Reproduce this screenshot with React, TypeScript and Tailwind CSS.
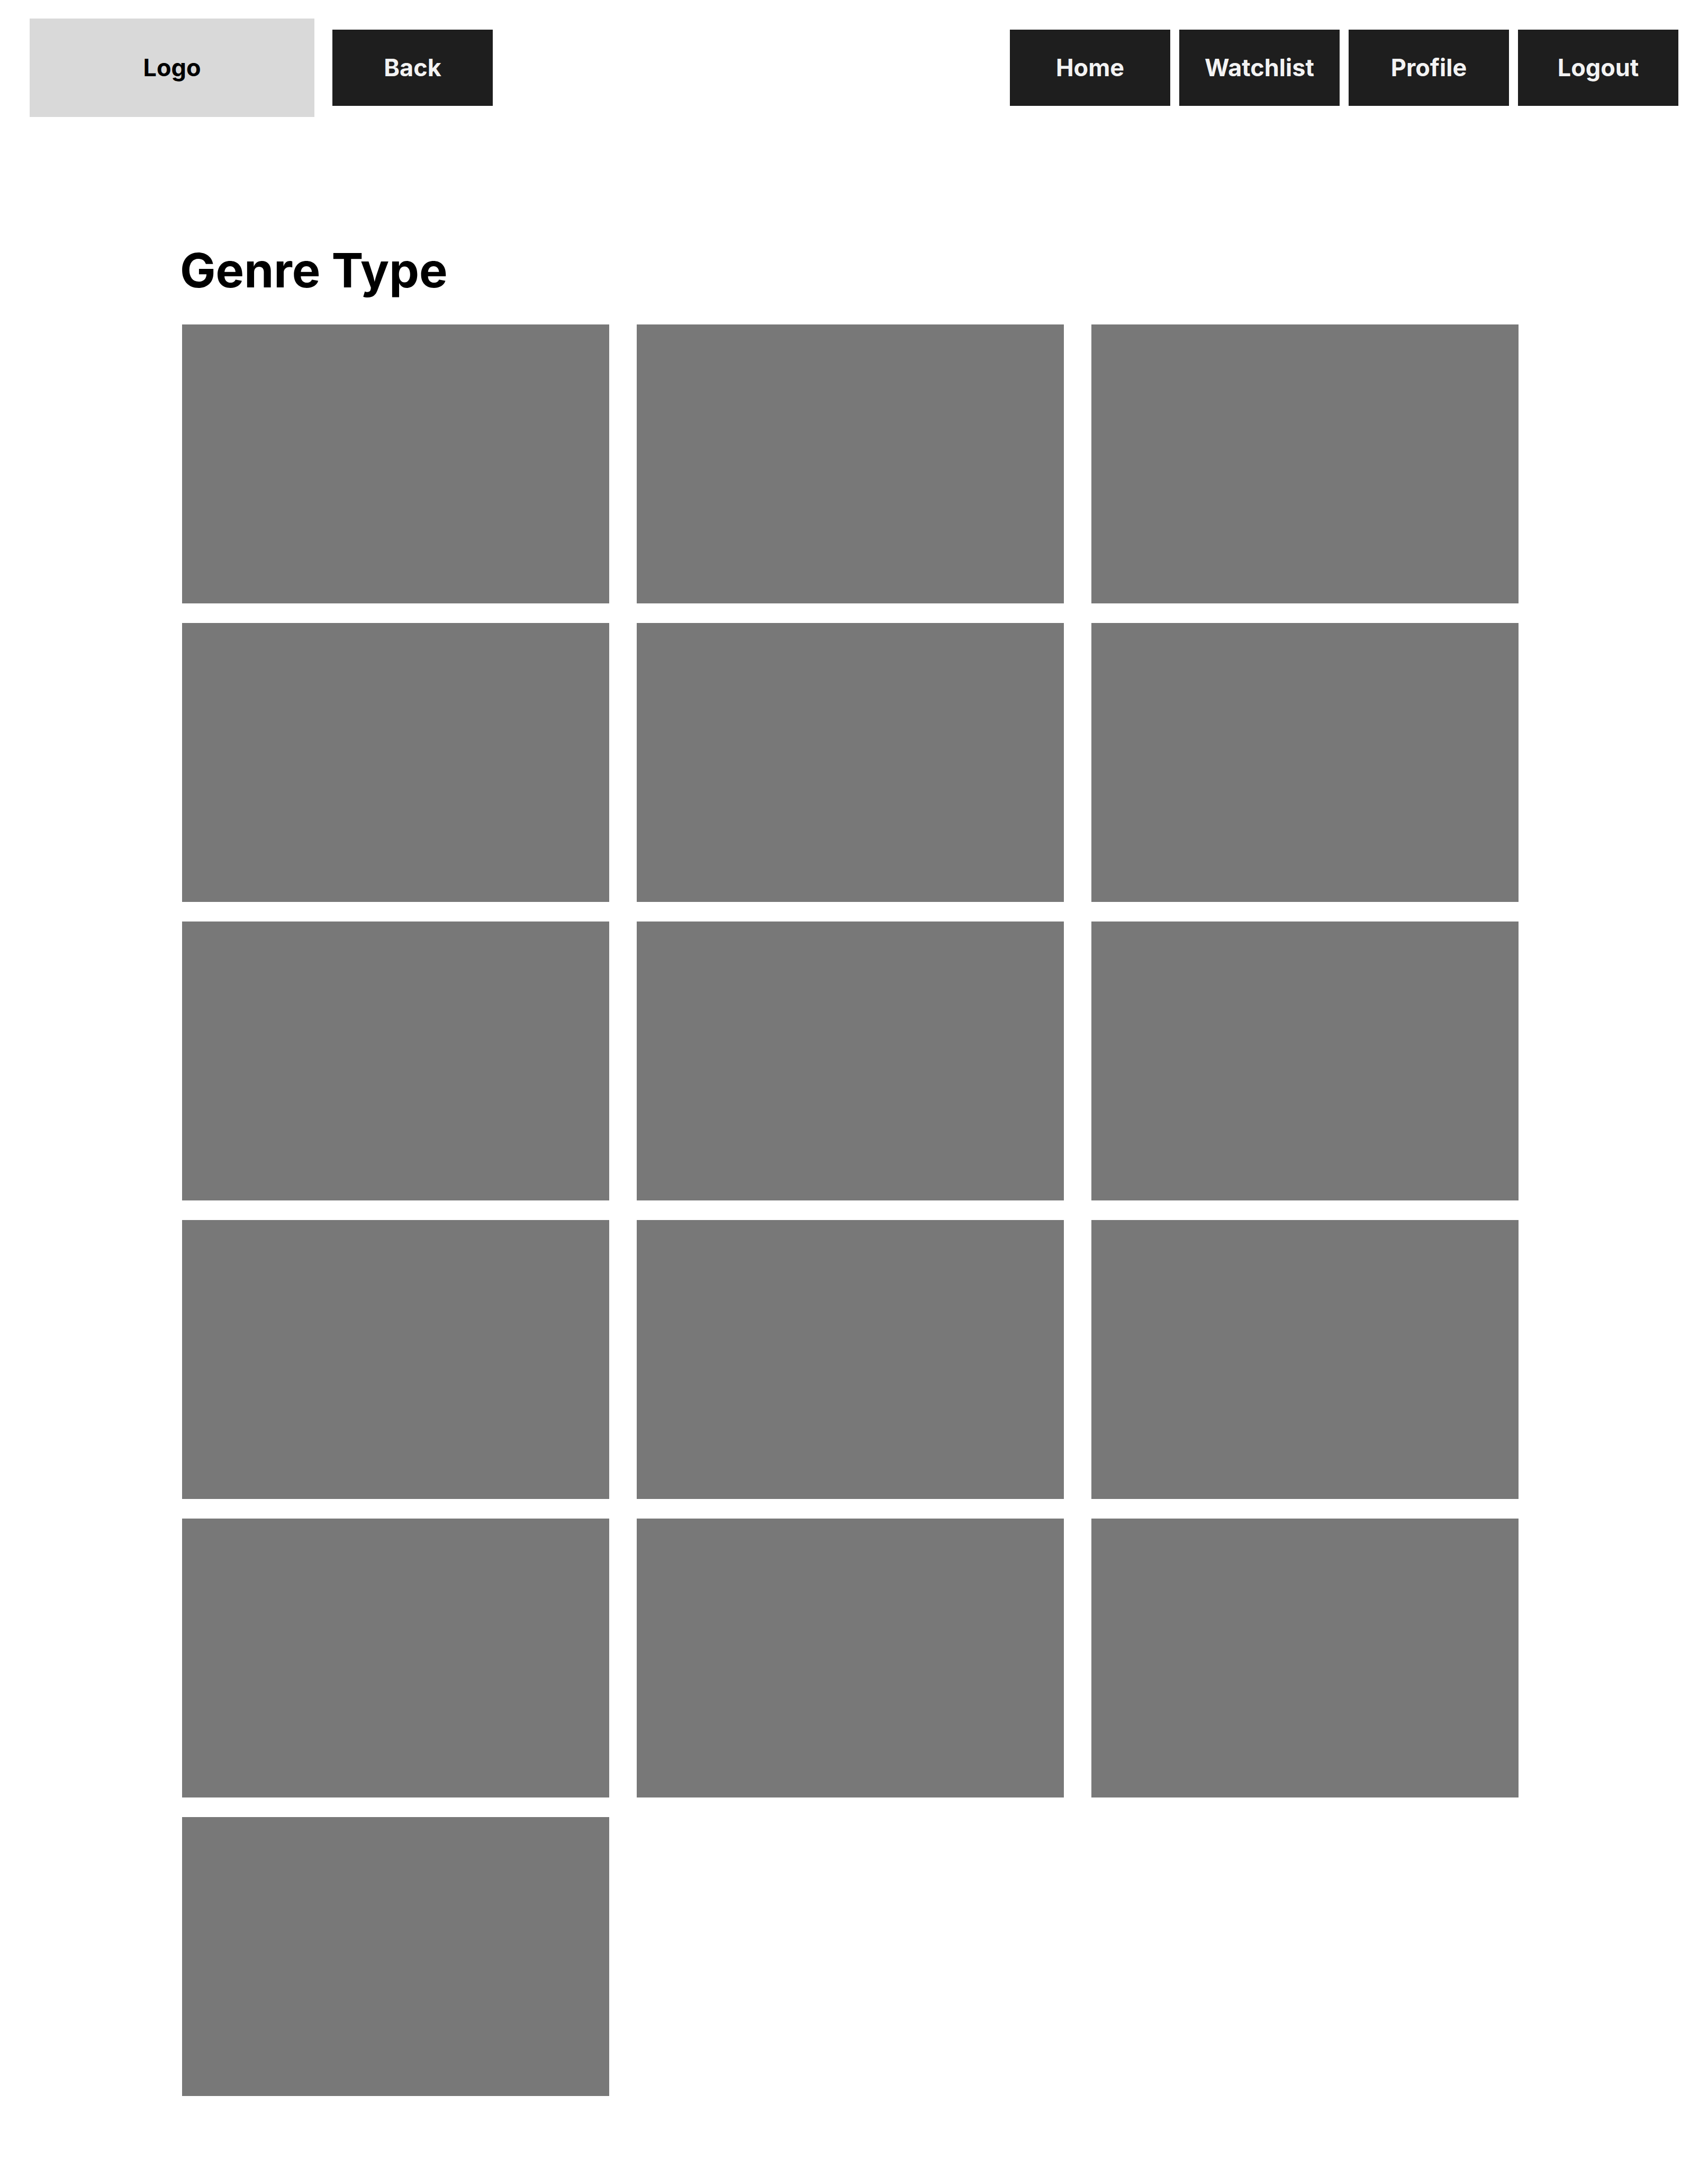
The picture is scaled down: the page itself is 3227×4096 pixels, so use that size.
const control =
  "flex h-[144px] w-[303px] items-center justify-center bg-[#1e1e1e] text-[45px] leading-[54px] font-bold text-[#f3f3f3] hover:bg-[#2c2c2c]";

const links = [
  { label: "Home", href: "#home" },
  { label: "Watchlist", href: "#watchlist" },
  { label: "Profile", href: "#profile" },
];

const titles = Array.from({ length: 16 }, (_, index) => index);

function Header() {
  return (
    <header className="flex items-center justify-between px-14 pt-[35px]">
      <div className="flex items-center gap-[34px]">
        <div className="flex h-[186px] w-[538px] items-center justify-center bg-[#d9d9d9] text-[45px] leading-[54px] font-bold text-black">
          Logo
        </div>
        <button type="button" className={control}>
          Back
        </button>
      </div>
      <nav className="flex items-center gap-[17px]">
        {links.map((link) => (
          <a key={link.label} href={link.href} className={control}>
            {link.label}
          </a>
        ))}
        <button type="button" className={control}>
          Logout
        </button>
      </nav>
    </header>
  );
}

export default function App() {
  return (
    <div className="min-h-screen bg-white font-['Inter',sans-serif]">
      <Header />
      <main className="pt-[236px] pr-[358px] pb-[136px] pl-[344px]">
        <h1 className="-ml-1 pb-[48px] text-[90px] leading-[108px] font-bold text-black">Genre Type</h1>
        <ul className="grid grid-cols-3 gap-x-[52px] gap-y-[37px]">
          {titles.map((title) => (
            <li key={title} className="aspect-[807/527] bg-[#787878]" />
          ))}
        </ul>
      </main>
    </div>
  );
}
